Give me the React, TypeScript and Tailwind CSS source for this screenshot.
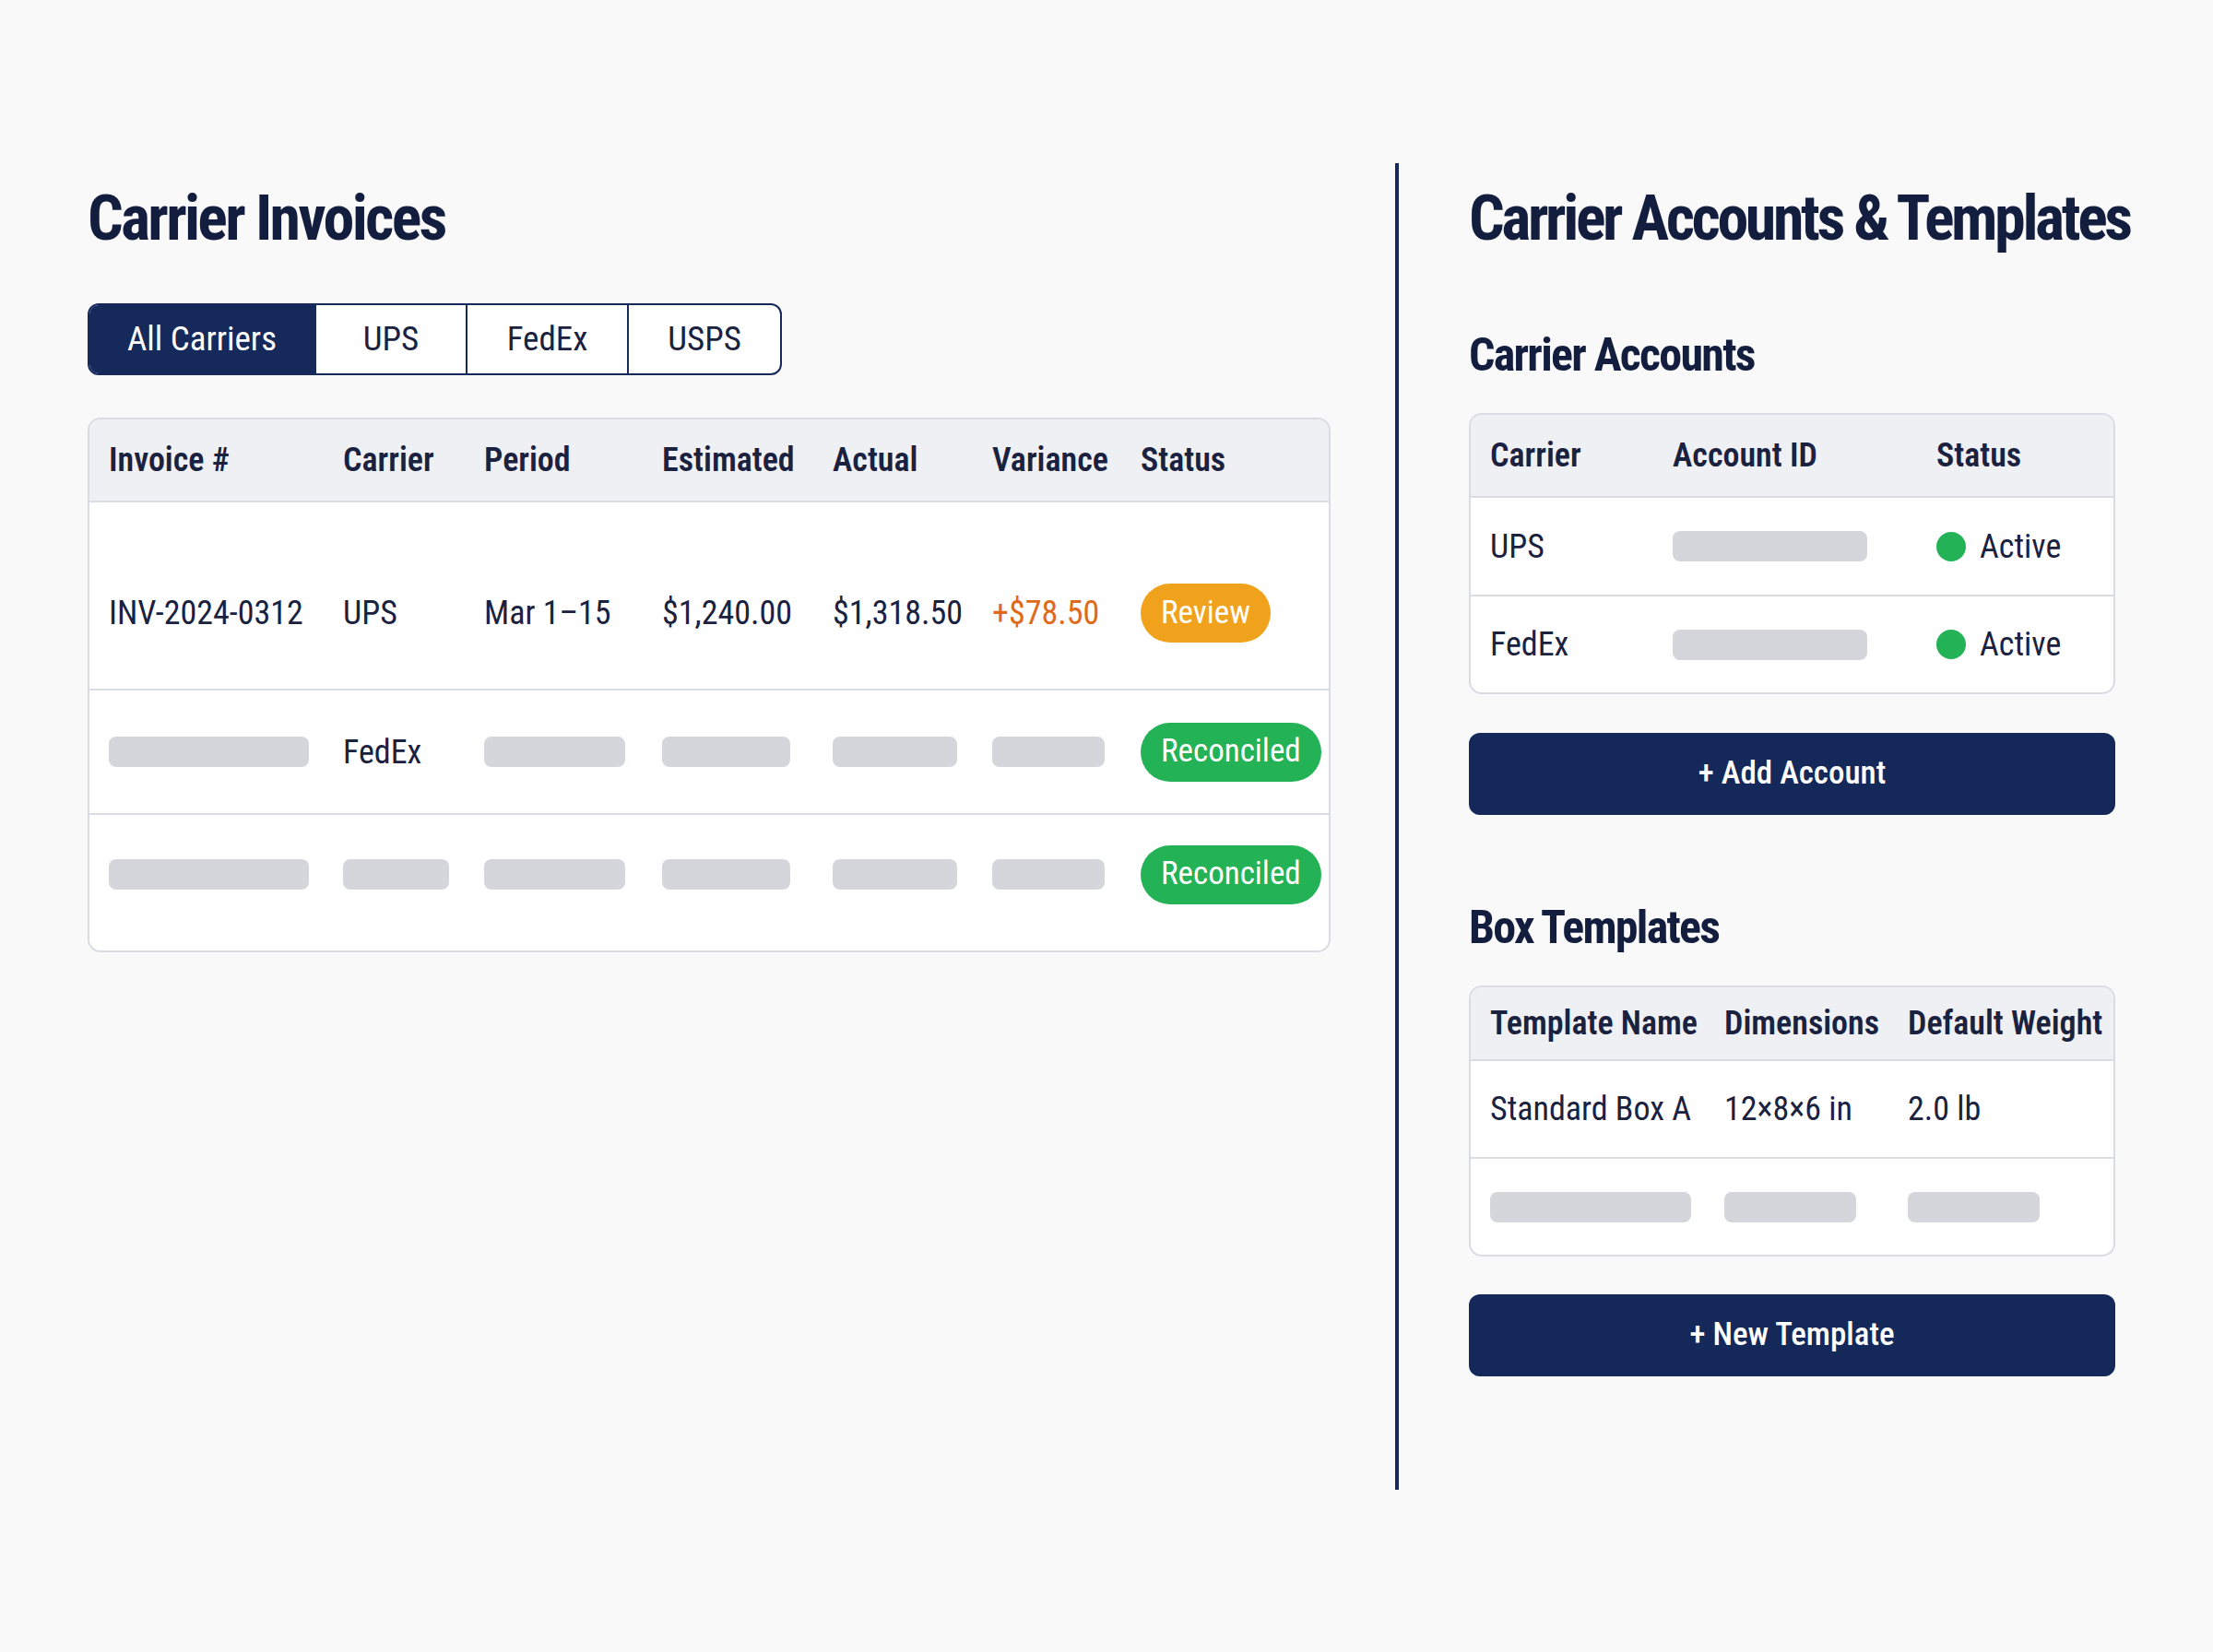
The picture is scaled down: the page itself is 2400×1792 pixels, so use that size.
import type { ReactNode } from "react";

const font = "font-['Roboto','Roboto_Condensed',sans-serif] font-stretch-[75%]";

function Skeleton({ w }: { w: string }) {
  return <div className={`h-[33px] rounded-[8px] bg-[#d4d6dc] ${w}`} />;
}

function Badge({ tone, children }: { tone: "amber" | "green"; children: ReactNode }) {
  const color = tone === "amber" ? "bg-[#f1a21d]" : "bg-[#23b256]";
  return (
    <span className={`inline-flex h-[64px] items-center rounded-full px-[22px] text-[35px] font-normal text-white ${color}`}>
      {children}
    </span>
  );
}

const invoiceCols = "grid grid-cols-[254px_153px_193px_185px_173px_161px_1fr] items-center pl-[21px]";

function InvoiceTable() {
  return (
    <div className="mt-[46px] overflow-hidden rounded-[14px] border-2 border-[#d9dce3] bg-white text-[36px] text-[#1a2240]">
      <div className={`${invoiceCols} h-[90px] border-b-2 border-[#d9dce3] bg-[#eff0f4] font-semibold`}>
        <span>Invoice #</span>
        <span>Carrier</span>
        <span>Period</span>
        <span>Estimated</span>
        <span>Actual</span>
        <span>Variance</span>
        <span>Status</span>
      </div>
      <div className={`${invoiceCols} h-[204px] border-b-2 border-[#d9dce3] pt-[38px]`}>
        <span>INV-2024-0312</span>
        <span>UPS</span>
        <span>Mar 1–15</span>
        <span>$1,240.00</span>
        <span>$1,318.50</span>
        <span className="text-[#e06a1b]">+$78.50</span>
        <div>
          <Badge tone="amber">Review</Badge>
        </div>
      </div>
      <div className={`${invoiceCols} h-[135px] border-b-2 border-[#d9dce3]`}>
        <Skeleton w="w-[217px]" />
        <span>FedEx</span>
        <Skeleton w="w-[153px]" />
        <Skeleton w="w-[139px]" />
        <Skeleton w="w-[135px]" />
        <Skeleton w="w-[122px]" />
        <div>
          <Badge tone="green">Reconciled</Badge>
        </div>
      </div>
      <div className={`${invoiceCols} h-[147px] pb-[18px]`}>
        <Skeleton w="w-[217px]" />
        <Skeleton w="w-[115px]" />
        <Skeleton w="w-[153px]" />
        <Skeleton w="w-[139px]" />
        <Skeleton w="w-[135px]" />
        <Skeleton w="w-[122px]" />
        <div>
          <Badge tone="green">Reconciled</Badge>
        </div>
      </div>
    </div>
  );
}

function Tabs() {
  const tabs = [
    { label: "All Carriers", w: "w-[244px]" },
    { label: "UPS", w: "w-[164px]" },
    { label: "FedEx", w: "w-[175px]" },
    { label: "USPS", w: "w-[166px]" },
  ];
  return (
    <div className="mt-[58px] flex h-[78px] w-fit overflow-hidden rounded-[12px] border-2 border-[#16295b] bg-white text-[37px] text-[#1a2240]">
      {tabs.map((t, i) => (
        <div
          key={t.label}
          className={`flex items-center justify-center ${t.w} ${
            i === 0 ? "bg-[#16295b] text-white" : "border-l-2 border-[#16295b]"
          }`}
        >
          {t.label}
        </div>
      ))}
    </div>
  );
}

function ActiveStatus() {
  return (
    <div className="flex items-center gap-[15px]">
      <span className="h-[32px] w-[32px] rounded-full bg-[#23b256]" />
      <span>Active</span>
    </div>
  );
}

const accountCols = "grid grid-cols-[198px_286px_1fr] items-center pl-[21px]";
const templateCols = "grid grid-cols-[254px_199px_1fr] items-center pl-[21px]";

function AccountsTable() {
  return (
    <div className="mt-[38px] overflow-hidden rounded-[14px] border-2 border-[#d9dce3] bg-white text-[36px] text-[#1a2240]">
      <div className={`${accountCols} h-[90px] border-b-2 border-[#d9dce3] bg-[#eff0f4] font-semibold`}>
        <span>Carrier</span>
        <span>Account ID</span>
        <span>Status</span>
      </div>
      <div className={`${accountCols} h-[107px] border-b-2 border-[#d9dce3]`}>
        <span>UPS</span>
        <Skeleton w="w-[211px]" />
        <ActiveStatus />
      </div>
      <div className={`${accountCols} h-[104px]`}>
        <span>FedEx</span>
        <Skeleton w="w-[211px]" />
        <ActiveStatus />
      </div>
    </div>
  );
}

function TemplatesTable() {
  return (
    <div className="mt-[38px] overflow-hidden rounded-[14px] border-2 border-[#d9dce3] bg-white text-[36px] text-[#1a2240]">
      <div className={`${templateCols} h-[80px] border-b-2 border-[#d9dce3] bg-[#eff0f4] font-semibold`}>
        <span>Template Name</span>
        <span>Dimensions</span>
        <span>Default Weight</span>
      </div>
      <div className={`${templateCols} h-[106px] border-b-2 border-[#d9dce3]`}>
        <span>Standard Box A</span>
        <span>12×8×6 in</span>
        <span>2.0 lb</span>
      </div>
      <div className={`${templateCols} h-[104px]`}>
        <Skeleton w="w-[218px]" />
        <Skeleton w="w-[143px]" />
        <Skeleton w="w-[143px]" />
      </div>
    </div>
  );
}

function PrimaryButton({ children, className = "" }: { children: ReactNode; className?: string }) {
  return (
    <button className={`flex h-[89px] w-full items-center justify-center rounded-[12px] bg-[#15285a] text-[35px] font-medium text-white ${className}`}>
      {children}
    </button>
  );
}

export default function App() {
  return (
    <div className={`min-h-screen bg-[#f9f9fa] ${font}`}>
      <div className="flex h-[1616px] items-stretch pt-[177px] pl-[95px]">
        <section className="w-[1348px] pt-[26px]">
          <h1 className="text-[68px] leading-none font-bold tracking-[-0.04em] text-[#131d3e]">Carrier Invoices</h1>
          <Tabs />
          <InvoiceTable />
        </section>

        <div className="ml-[70px] w-[4px] bg-[#17295a]" />

        <section className="ml-[76px] w-[701px] pt-[26px]">
          <h1 className="whitespace-nowrap text-[68px] leading-none font-bold tracking-[-0.05em] text-[#131d3e]">
            Carrier Accounts &amp; Templates
          </h1>
          <h2 className="mt-[89px] text-[50px] leading-none font-bold tracking-[-0.035em] text-[#131d3e]">Carrier Accounts</h2>
          <AccountsTable />
          <PrimaryButton className="mt-[42px]">+ Add Account</PrimaryButton>
          <h2 className="mt-[97px] text-[50px] leading-none font-bold tracking-[-0.035em] text-[#131d3e]">Box Templates</h2>
          <TemplatesTable />
          <PrimaryButton className="mt-[41px]">+ New Template</PrimaryButton>
        </section>
      </div>
    </div>
  );
}
